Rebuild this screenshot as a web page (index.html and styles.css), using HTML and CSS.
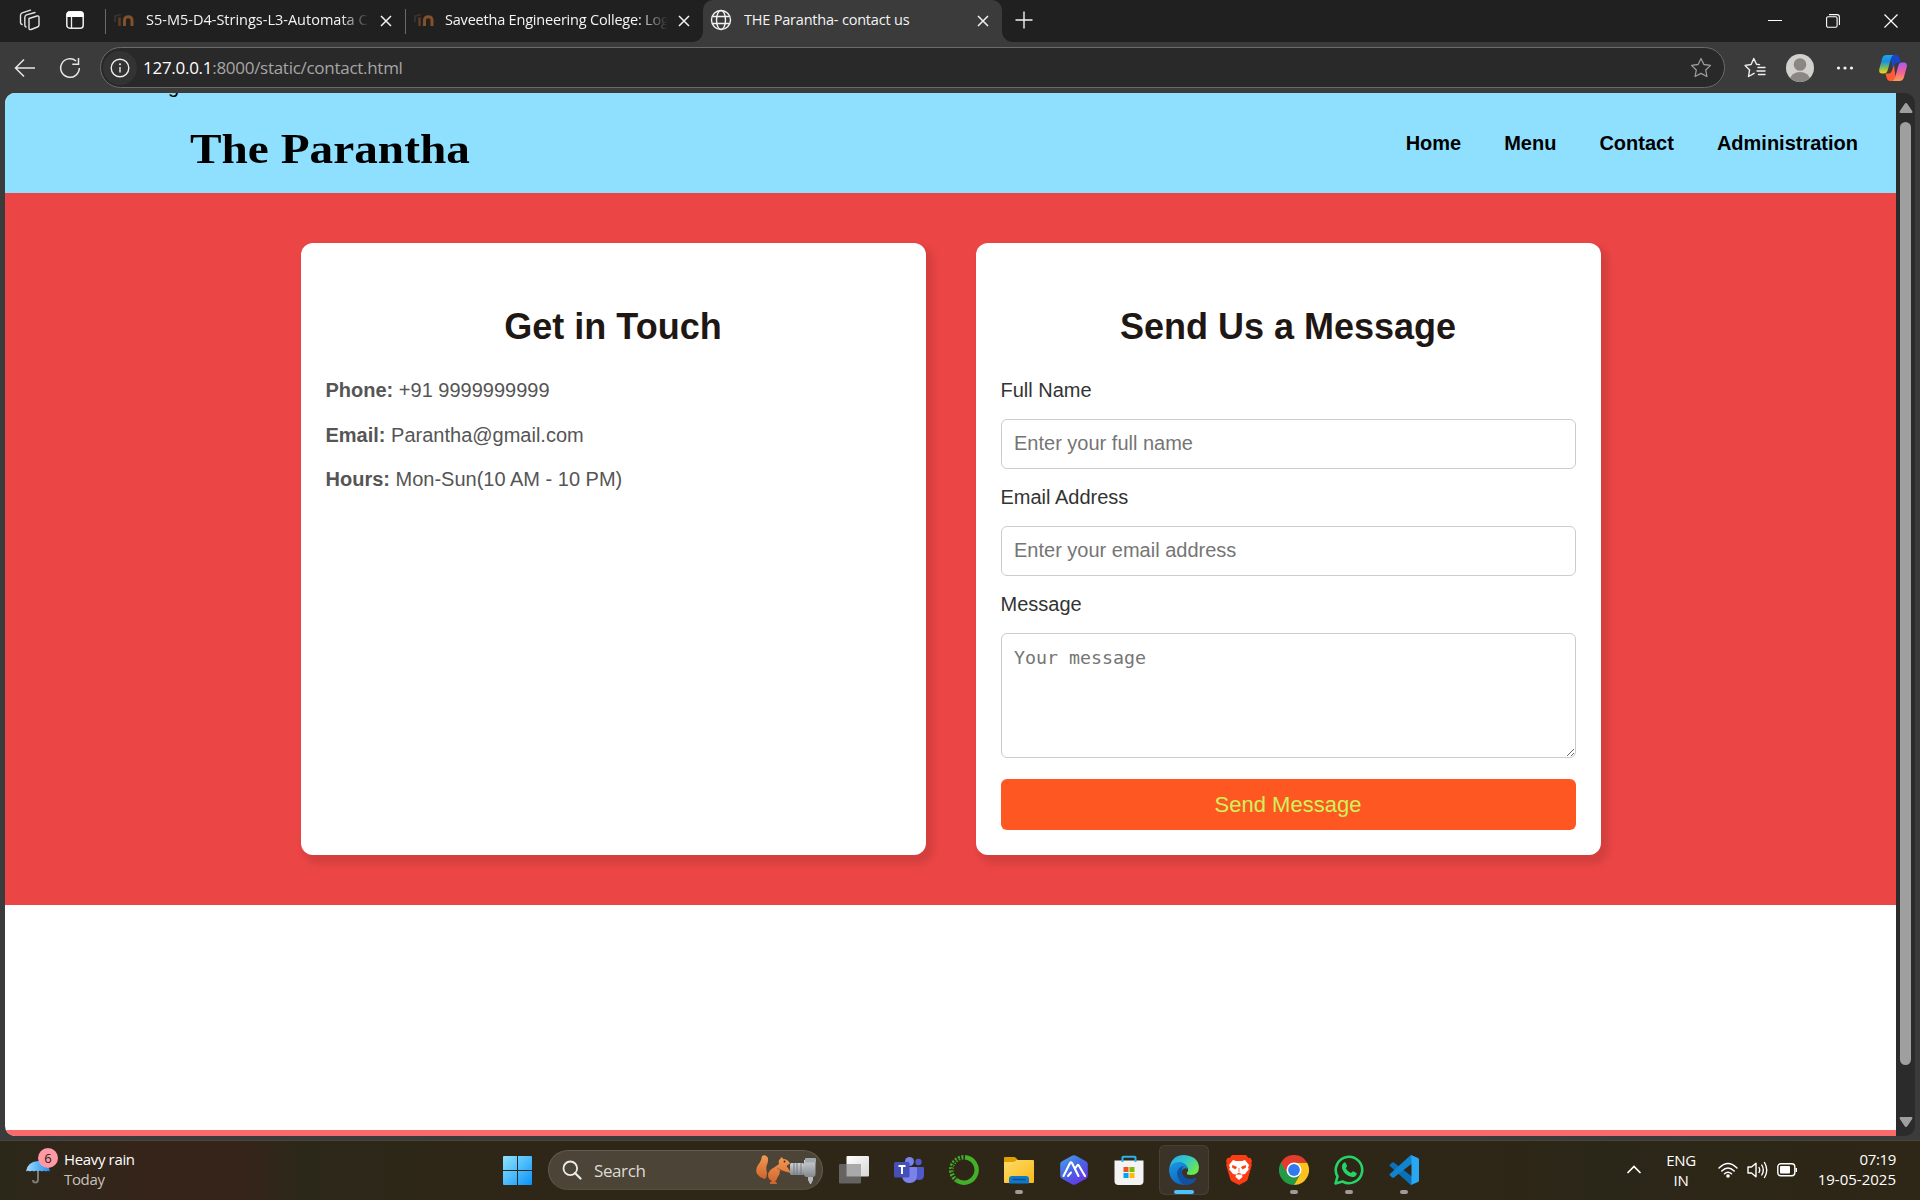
FILE: index.html
```html
<!DOCTYPE html>
<html lang="en">
<head>
<meta charset="utf-8">
<title>THE Parantha- contact us</title>
<link rel="stylesheet" href="styles.css">
</head>
<body>
<div class="browser">
  <div class="tabstrip">
    <div class="strip-tools">
      <svg class="ic-workspaces" viewBox="0 0 22 22" width="22" height="22"><g fill="none" stroke="#e4e4e4" stroke-width="1.400" stroke-linejoin="round" stroke-linecap="round"><path d="M10 9.500l8-2.500q2-.5 2 1.500v7.500q0 1.500-1.500 2l-6.500 2.500q-2 .5-2-1.500z"/><path d="M7 18q-1.200-.5-1.200-2V8.500q0-2 1.700-2.600L16 3.500"/><path d="M3 15.500q-1.500-.5-1.500-2V6.500q0-2 1.700-2.600L11.500 1.200"/></g></svg>
      <svg class="ic-tabs" viewBox="0 0 20 20" width="20" height="20"><rect x="1.800" y="1.800" width="16.400" height="16.400" rx="3" fill="none" stroke="#eee" stroke-width="1.500"/><path d="M1.500 7V4q0-2.500 2.500-2.500h12q2.500 0 2.500 2.500v3z" fill="#fff"/><path d="M6.500 7v11" stroke="#eee" stroke-width="1.300"/></svg>
    </div>
    <div class="tab">
      <svg class="moodle" viewBox="0 0 20 14" width="20" height="14"><path d="M0 3.500L7 1.500M1 4v5" fill="none" stroke="#3a3230" stroke-width="1.800"/><path d="M5.500 13V4.500" fill="none" stroke="#5f3d26" stroke-width="2.600"/><path d="M10.500 13V7q0-3.300 3.700-3.300T18 7v6" fill="none" stroke="#83502a" stroke-width="3"/></svg>
      <span class="tab-title t1">S5-M5-D4-Strings-L3-Automata C</span>
      <svg class="close" viewBox="0 0 12 12" width="12" height="12"><path d="M1 1l10 10M11 1L1 11" stroke="#f2f2f2" stroke-width="1.500"/></svg>
    </div>
    <div class="tab tab-b">
      <svg class="moodle" viewBox="0 0 20 14" width="20" height="14"><path d="M0 3.500L7 1.500M1 4v5" fill="none" stroke="#3a3230" stroke-width="1.800"/><path d="M5.500 13V4.500" fill="none" stroke="#5f3d26" stroke-width="2.600"/><path d="M10.500 13V7q0-3.300 3.700-3.300T18 7v6" fill="none" stroke="#83502a" stroke-width="3"/></svg>
      <span class="tab-title t2">Saveetha Engineering College: Log</span>
      <svg class="close" viewBox="0 0 12 12" width="12" height="12"><path d="M1 1l10 10M11 1L1 11" stroke="#f2f2f2" stroke-width="1.500"/></svg>
    </div>
    <div class="tab active">
      <svg class="globe" viewBox="0 0 22 22" width="22" height="22"><g fill="none" stroke="#f2f2f2" stroke-width="1.400"><circle cx="11" cy="11" r="9.500"/><ellipse cx="11" cy="11" rx="4.500" ry="9.500"/><path d="M2.500 7.500h17M2.500 14.500h17"/></g></svg>
      <span class="tab-title t3">THE Parantha- contact us</span>
      <svg class="close" viewBox="0 0 12 12" width="12" height="12"><path d="M1 1l10 10M11 1L1 11" stroke="#f2f2f2" stroke-width="1.500"/></svg>
    </div>
    <svg class="plus" viewBox="0 0 18 18" width="18" height="18"><path d="M9 .5v17M.5 9h17" stroke="#f2f2f2" stroke-width="1.400"/></svg>
    <div class="win-controls">
      <svg viewBox="0 0 14 14" width="14" height="14"><path d="M0 6.500h14" stroke="#fff"/></svg>
      <svg viewBox="0 0 14 14" width="14" height="14"><g fill="none" stroke="#fff" stroke-width="1.100"><rect x=".6" y="2.800" width="10.500" height="10.500" rx="1.500"/><path d="M3 .6h8q2.400 0 2.400 2.400v8"/></g></svg>
      <svg viewBox="0 0 14 14" width="14" height="14"><path d="M.5.5l13 13M13.500.5l-13 13" stroke="#fff" stroke-width="1.200"/></svg>
    </div>
  </div>

  <div class="toolbar">
    <svg class="back" viewBox="0 0 22 20" width="22" height="20"><path d="M21 10H1.500M10 1.500L1.500 10l8.500 8.500" fill="none" stroke="#e8e8e8" stroke-width="1.500"/></svg>
    <svg class="reload" viewBox="0 0 22 22" width="22" height="22"><path d="M20.300 11a9.300 9.300 0 1 1-3.200-7M19.500 1v6.200h-6.200" fill="none" stroke="#e8e8e8" stroke-width="1.500"/></svg>
    <div class="address">
      <span class="info"><svg viewBox="0 0 20 20" width="20" height="20"><circle cx="10" cy="10" r="8.800" fill="none" stroke="#eee" stroke-width="1.400"/><path d="M10 9v5.500" stroke="#eee" stroke-width="1.400"/><circle cx="10" cy="6.300" r="1" fill="#eee"/></svg></span>
      <span class="url"><b>127.0.0.1</b>:8000/static/contact.html</span>
      <svg class="star" viewBox="0 0 22 21" width="22" height="21"><path d="M11 1.500l2.900 6 6.600.9-4.800 4.600 1.200 6.500-5.900-3.100-5.900 3.100 1.200-6.500L1.500 8.400l6.600-.9z" fill="none" stroke="#9b9b9b" stroke-width="1.300" stroke-linejoin="round"/></svg>
    </div>
    <svg class="favs" viewBox="0 0 22 21" width="22" height="21"><g fill="none" stroke="#f0f0f0" stroke-width="1.400" stroke-linejoin="round" stroke-linecap="round"><path d="M15.500 7.600l-3-.3-2.700-5.800-2.700 6-6 .9 4.500 4.500-1.100 6.600 5.600-3.200"/><path d="M14 10.500h7M13 14h8M14.500 17.500H21"/></g></svg>
    <svg class="avatar" viewBox="0 0 28 28" width="28" height="28"><defs><clipPath id="av"><circle cx="14" cy="14" r="14"/></clipPath></defs><g clip-path="url(#av)"><rect width="28" height="28" fill="#d3d1ce"/><circle cx="14" cy="10.500" r="6.300" fill="#8b8784"/><ellipse cx="14" cy="26" rx="10" ry="8" fill="#8b8784"/></g></svg>
    <svg class="dots" viewBox="0 0 18 4" width="18" height="4"><g fill="#f2f2f2"><circle cx="2.500" cy="2" r="1.600"/><circle cx="9" cy="2" r="1.600"/><circle cx="15.500" cy="2" r="1.600"/></g></svg>
    <svg class="copilot" viewBox="0 0 28 26" width="28" height="26"><defs><linearGradient id="c1" x1="0" y1="0" x2="0" y2="1"><stop offset="0" stop-color="#1fa3f5"/><stop offset=".35" stop-color="#1b8fe0"/><stop offset=".7" stop-color="#7fc05a"/><stop offset="1" stop-color="#ffd00a"/></linearGradient><linearGradient id="c2" x1="0" y1="0" x2="0" y2="1"><stop offset="0" stop-color="#a95cf2"/><stop offset=".5" stop-color="#ef5e9d"/><stop offset="1" stop-color="#ff9f4a"/></linearGradient></defs><path d="M11 0h6q2.600 0 3.500 3l1.300 4.500h-3q-2.600 0-3.400 2.500L14 15z" fill="#1746c8"/><path d="M17 26h-6q-2.400 0-3.300-3L6.500 18.500h3q2.500 0 3.300-2.500L15 10z" fill="#ff5c35"/><path d="M7.500 0h7.200q-1.900.6-2.600 3L8.600 15.500Q7.700 18.500 5 18.500H3Q-.5 18.500.3 14L3 4Q4 0 7.500 0z" fill="url(#c1)"/><path d="M20.500 26h-7.200q1.900-.6 2.600-3l3.500-12.500q.9-3 3.600-3h2q3.500 0 2.700 4.500L25 22q-1 4-4.500 4z" fill="url(#c2)"/></svg>
  </div>

  <div class="viewport">
    <main class="page">
      <header class="site-header">
        <span class="prev-line">g</span>
        <h1>The Parantha</h1>
        <nav><a>Home</a><a>Menu</a><a>Contact</a><a>Administration</a></nav>
      </header>
      <section class="contact">
        <div class="card">
          <h2>Get in Touch</h2>
          <div class="details">
            <p><strong>Phone:</strong> +91 9999999999</p>
            <p><strong>Email:</strong> Parantha@gmail.com</p>
            <p><strong>Hours:</strong> Mon-Sun(10 AM - 10 PM)</p>
          </div>
        </div>
        <form class="card">
          <h2>Send Us a Message</h2>
          <label for="name">Full Name</label>
          <input id="name" type="text" placeholder="Enter your full name">
          <label for="email">Email Address</label>
          <input id="email" type="email" placeholder="Enter your email address">
          <label for="msg">Message</label>
          <textarea id="msg" placeholder="Your message"></textarea>
          <button type="button">Send Message</button>
        </form>
      </section>
      <footer class="site-footer"></footer>
    </main>
    <div class="scrollbar">
      <svg viewBox="0 0 14 10" width="14" height="10"><path d="M7 0q.8 0 1.300.8l5 7.500Q14 10 12.500 10h-11Q0 10 .7 8.300l5-7.500Q6.200 0 7 0z" fill="#9f9f9f"/></svg>
      <div class="thumb"></div>
      <svg viewBox="0 0 14 10" width="14" height="10"><path d="M7 10q.8 0 1.300-.8l5-7.500Q14 0 12.500 0h-11Q0 0 .7 1.700l5 7.500Q6.200 10 7 10z" fill="#9f9f9f"/></svg>
    </div>
  </div>
</div>

<div class="taskbar">
  <div class="weather">
    <div class="umbrella">
      <svg viewBox="0 0 26 24" width="26" height="24"><defs><linearGradient id="um"><stop offset="0" stop-color="#a5dcff"/><stop offset=".5" stop-color="#5cb4f8"/><stop offset="1" stop-color="#2c8eea"/></linearGradient></defs><path d="M13 10v9.500q0 3-2.500 3T8 20" fill="none" stroke="#7e7a76" stroke-width="2"/><path d="M1 11.500Q2 2 13 1q11 1 12 10.500-2-1.500-4 0-2-1.500-4 0-2-1.500-4 0-2-1.500-4 0-2-1.500-4 0-2-1.500-4 0z" fill="url(#um)"/></svg>
      <span class="badge">6</span>
    </div>
    <div class="weather-text"><span>Heavy rain</span><span class="dim">Today</span></div>
  </div>

  <div class="apps">
    <svg class="start" viewBox="0 0 29 29" width="29" height="29"><defs><linearGradient id="wn" x1="0" y1="0" x2="1" y2="1"><stop offset="0" stop-color="#8fe3ff"/><stop offset="1" stop-color="#0a93f8"/></linearGradient></defs><path d="M1 0h13v14H0V1q0-1 1-1zM15 0h13q1 0 1 1v13H15zM0 15h14v14H1q-1 0-1-1zM15 15h14v13q0 1-1 1H15z" fill="url(#wn)"/></svg>
    <div class="search">
      <svg viewBox="0 0 20 20" width="20" height="20"><circle cx="8.300" cy="8.300" r="6.800" fill="none" stroke="#ececec" stroke-width="1.800"/><path d="M13 13l5.500 5.500" stroke="#ececec" stroke-width="2.200" stroke-linecap="round"/></svg>
      <span>Search</span>
      <svg class="squirrel" viewBox="0 0 62 32" width="62" height="32"><defs><linearGradient id="sq" x1="0" y1="0" x2="0" y2="1"><stop offset="0" stop-color="#f39a54"/><stop offset="1" stop-color="#cf642a"/></linearGradient><linearGradient id="cm" x1="0" y1="0" x2="0" y2="1"><stop offset="0" stop-color="#d0d3d6"/><stop offset="1" stop-color="#84898f"/></linearGradient></defs><path d="M7 2q4-2 6 2 .5 4-1.500 8-.5 4 .5 7 0 4-2 6-5-1-8-5Q0 15 3 11 6 8 7 2z" fill="url(#sq)"/><path d="M25 5l2-2 1 2q5 0 7 4.500l-3.500 2.500q2.500 3 4.500 7l-6-1.500-5-2q.5 4-2.500 8-.5 2-2.500 4l2 1.500q.5 1-1 1h-6v-1.500l2-1.500q-4-1.500-4-6 .5-5 6-7.500l5-3.500q-1-3.500 1-5z" fill="url(#sq)"/><path d="M22 14q3 2 6 3.500" fill="none" stroke="#a94e25" stroke-width=".8"/><circle cx="29.500" cy="7.500" r=".9" fill="#3b2118"/><rect x="35" y="9" width="14" height="12" rx="1.500" fill="url(#cm)"/><path d="M39 9v12M42 9v12M46 9v12" stroke="#777c81"/><path d="M49 6l9-1q2.500 0 2.500 3v12q0 3-3 3h-6q-2.500 0-2.500-3z" fill="url(#cm)"/><rect x="50" y="4" width="11" height="4.500" rx="1" fill="#a4a9ad"/><path d="M53 23h5v3l-2 4h-1l-2-4z" fill="#b7babd"/></svg>
    </div>
    <div class="app"><svg viewBox="0 0 30 30" width="30" height="30"><defs><linearGradient id="tv" x1="0" y1="0" x2="1" y2="1"><stop offset="0" stop-color="#fff"/><stop offset="1" stop-color="#d6d6d6"/></linearGradient></defs><rect x="7.500" y="1" width="22.500" height="20.500" rx="1" fill="url(#tv)"/><rect x="0" y="9" width="22" height="19.500" rx="1" fill="#646360"/><path d="M7.500 9H22v12.500H7.500z" fill="#a9a9a9"/></svg></div>
    <div class="app"><svg viewBox="0 0 30 30" width="30" height="30"><circle cx="24.500" cy="7" r="3.200" fill="#5059c9"/><path d="M20 12h9q1 0 1 1v7q0 5-5 5-3 0-5-2z" fill="#5059c9"/><circle cx="15.500" cy="6.500" r="4.500" fill="#7b83eb"/><path d="M8 12h14q1 0 1 1v7q0 8-7.500 8-6 0-7.500-6z" fill="#7b83eb"/><rect x="0" y="7" width="15.500" height="15.500" rx="1.500" fill="#464eb8"/><path d="M4.500 11h7M8 11v8" stroke="#fff" stroke-width="2"/></svg></div>
    <div class="app"><svg viewBox="0 0 30 30" width="30" height="30"><path d="M16 2.300A12.700 12.700 0 1 1 8 25.600" fill="none" stroke="#43b02a" stroke-width="4.400"/><path d="M8 25.600A12.700 12.700 0 0 1 14.500 2.300" fill="none" stroke="#43b02a" stroke-width="4.400" stroke-dasharray="2 1.300"/><path d="M7 24A12 12 0 0 1 14 3" fill="none" stroke="#2e2617" stroke-width="1.200" stroke-dasharray="1.500 2"/></svg></div>
    <div class="app"><svg viewBox="0 0 30 30" width="30" height="30"><defs><linearGradient id="fe" x1="0" y1="0" x2="1" y2="1"><stop offset="0" stop-color="#ffdb66"/><stop offset="1" stop-color="#f7b918"/></linearGradient></defs><path d="M0 3q0-1 1-1h9q1 0 2 1l2 2h-2l-2 3H0z" fill="#e0a100"/><path d="M0 7h9q2 0 3-2h17q1 0 1 1v21q0 1-1 1H1q-1 0-1-1z" fill="url(#fe)"/><path d="M5 28.500V24q0-3 3-3h14q3 0 3 3v4.500z" fill="#1078c8"/><path d="M8.500 24.500h13" stroke="#0a4e94" stroke-width="1.500"/></svg><i class="run"></i></div>
    <div class="app"><svg viewBox="0 0 30 30" width="30" height="30"><defs><linearGradient id="hx" x1="0" y1="0" x2=".7" y2="1"><stop offset="0" stop-color="#4ca3ed"/><stop offset=".5" stop-color="#4669e4"/><stop offset="1" stop-color="#6734e8"/></linearGradient></defs><path d="M13 .7q2-1 4 0l10 5.600q1.800 1 1.800 3v11.400q0 2-1.800 3l-10 5.600q-2 1-4 0L3 23.700q-1.800-1-1.800-3V9.300q0-2 1.800-3z" fill="url(#hx)"/><path d="M4.500 21l6.500-13q1-1.500 2 0l6.500 13M16.500 13l1.700-2.500q.8-1.200 1.600 0L26 21M9 21l3-3.500" fill="none" stroke="#fff" stroke-width="2.100" stroke-linecap="round"/></svg></div>
    <div class="app"><svg viewBox="0 0 30 30" width="30" height="30"><path d="M.5 5.500h29V26q0 4-4 4h-21q-4 0-4-4z" fill="#f3f3f3"/><path d="M8.500 7V2.500q0-.8.800-.8h11.400q.8 0 .8.800V7" fill="none" stroke="#29b2ee" stroke-width="2"/><path d="M9.500 12h5v5h-5z" fill="#f25022"/><path d="M15.500 12h5v5h-5z" fill="#7fba00"/><path d="M9.500 18h5v5h-5z" fill="#00a4ef"/><path d="M15.500 18h5v5h-5z" fill="#ffb900"/></svg></div>
    <div class="app open"><svg viewBox="0 0 30 30" width="30" height="30"><defs><linearGradient id="eg" x1="0" y1="0" x2="1" y2=".6"><stop offset="0" stop-color="#29a9e8"/><stop offset=".5" stop-color="#2fc5cf"/><stop offset="1" stop-color="#6be84f"/></linearGradient><linearGradient id="eb" x1="0" y1="0" x2=".6" y2="1"><stop offset="0" stop-color="#1a9be6"/><stop offset="1" stop-color="#0d62bb"/></linearGradient></defs><path d="M0 15Q1 6 10 6q8 1 8.500 8-4-2-5.500 2-1 7 5 10 5 2 9-1-4 5-12 5Q1 29 0 15z" fill="url(#eb)"/><path d="M8 18q1-6 7-7-3 3-2 7 2 6 9 6 3 0 5-1.500.8.500 0 1.500-4 6-12 6-6-4-7-12z" fill="#1151a0"/><path d="M0 15Q2 0 15 0q14 1 15 12 0 8-8 8-5 0-4-2.500 2-2 .5-5Q16 7 10 7 2 7 0 15z" fill="url(#eg)"/></svg><i class="run"></i></div>
    <div class="app"><svg viewBox="0 0 30 30" width="30" height="30"><path d="M8 0h14l2.500 3 2-.3L28 6l-.7 2 .5 2-4 14q-.5 1.500-2 2.500L15 30l-6.800-3.500q-1.500-1-2-2.500l-4-14 .5-2L2 6l1.500-3.300 2 .3z" fill="#fb3c14"/><path d="M9 5l3 1h6l3-1 4 5-1 3 1 1-4 5-3 .5.5 2.500-3.500 3-3.500-3 .5-2.500-3-.5-4-5 1-1-1-3z" fill="#fff"/><path d="M8.500 10.500l4 1.500-1 2-3-1.500zM21.500 10.500l-4 1.500 1 2 3-1.500zM15 13v4M12.500 19.500l2.500-1.500 2.500 1.500" fill="#fb3c14" stroke="#fb3c14" stroke-width=".7"/></svg></div>
    <div class="app"><svg viewBox="0 0 30 30" width="30" height="30"><path d="M15 15L2 7.500A15 15 0 0 0 15 30l6.500-11.200z" fill="#249a46"/><path d="M15 7.500h13A15 15 0 0 1 15 30l6.500-11.200z" fill="#fcc31e"/><path d="M2 7.500A15 15 0 0 1 28 7.500H15l-6.500 11.200z" fill="#e33b2e"/><circle cx="15" cy="15" r="7.500" fill="#fff"/><circle cx="15" cy="15" r="5.900" fill="#3079ee"/></svg><i class="run"></i></div>
    <div class="app"><svg viewBox="0 0 30 30" width="30" height="30"><path d="M1.500 28.500l2-7a13.200 13.200 0 1 1 5 5z" fill="none" stroke="#25d366" stroke-width="2.600" stroke-linejoin="round"/><path d="M10 7.500q1-.6 1.800.6l1.200 2.700q.3.800-1.300 2.500 2 3.800 5.300 4.800 1.500-1.800 2-1.800l3.200 1.500q1 .5.300 2-1.200 2.700-4.400 2.200-7.600-1.500-10-8.500-.8-3.800 1.900-6z" fill="#25d366"/></svg><i class="run"></i></div>
    <div class="app"><svg viewBox="0 0 30 30" width="30" height="30"><path d="M1 9.500l2-2q1-.7 2 0L23 21.500V29q0 1-1.500.8L.8 11q-.8-.8.200-1.500z" fill="#0a70b8"/><path d="M1 20.500l2 2q1 .7 2 0L23 8.500V1Q23 0 21.500.3L.8 19q-.8.800.2 1.500z" fill="#1184d0"/><path d="M22 0l7 3q1 .5 1 1.500v21q0 1-1 1.500l-7 3 .5-2V2z" fill="#2aa7f2"/></svg><i class="run"></i></div>
  </div>

  <div class="tray">
    <svg viewBox="0 0 14 9" width="14" height="9"><path d="M1 7.500l6-6 6 6" fill="none" stroke="#fff" stroke-width="1.700" stroke-linecap="round"/></svg>
    <div class="lang"><span>ENG</span><span>IN</span></div>
    <div class="status">
      <svg viewBox="0 0 20 16" width="20" height="16"><g fill="none" stroke="#fff" stroke-width="1.500" stroke-linecap="round"><path d="M1 6Q10-3 19 6M3.800 9q6.200-6 12.400 0M6.500 11.800q3.500-3.200 7 0"/></g><circle cx="10" cy="14" r="1.800" fill="#fff"/></svg>
      <svg viewBox="0 0 21 18" width="21" height="18"><g fill="none" stroke="#fff" stroke-width="1.400" stroke-linejoin="round" stroke-linecap="round"><path d="M1 6h3.500L9 2.200v13.600L4.500 12H1z"/><path d="M12 6.500q1.500 2.500 0 5M14.800 4q3 5 0 10M17.500 1.500q4.500 7.500 0 15"/></g></svg>
      <svg viewBox="0 0 21 14" width="21" height="14"><rect x=".8" y=".8" width="17" height="12" rx="3" fill="none" stroke="#fff" stroke-width="1.400"/><rect x="3" y="3" width="10" height="7.600" rx="1" fill="#fff"/><path d="M18.500 5h1.500v4h-1.500z" fill="#fff"/></svg>
    </div>
    <div class="clock"><span>07:19</span><span class="date">19-05-2025</span></div>
  </div>
</div>
</body>
</html>
```
FILE: styles.css
```css
* { box-sizing: border-box; }
body {
  margin: 0;
  width: 1920px;
  height: 1200px;
  overflow: hidden;
  background: #3b3b3b;
  font-family: "Open Sans", "Noto Sans", sans-serif;
}
svg { display: block; flex: none; }
.browser { height: 1140px; display: flex; flex-direction: column; }

/* tab strip */
.tabstrip { height: 42px; background: #202020; display: flex; align-items: flex-start; flex: none; }
.strip-tools { width: 105px; display: flex; padding: 9px 0 0 19px; gap: 24px; }
.ic-tabs { margin-top: 1px; }
.tab { width: 300px; height: 42px; display: flex; align-items: flex-start; padding: 0 13px 0 8px; position: relative; }
.tab::before { content: ""; position: absolute; left: 0; top: 9px; width: 1px; height: 25px; background: #6a6a6a; }
.tab-b { width: 298px; }
.moodle { margin: 13px 12px 0 1px; }
.tab-b .moodle { margin: 13px 11px 0 1px; }
.tab-title { flex: 1; font-size: 14.5px; line-height: 20px; margin-top: 10px; color: #f4f4f4; white-space: nowrap; overflow: hidden; }
.t1 { letter-spacing: 0; }
.t2 { letter-spacing: -.2px; }
.t3 { letter-spacing: -.2px; }
.t1, .t2 { -webkit-mask-image: linear-gradient(90deg, #000 86%, transparent 99%); mask-image: linear-gradient(90deg, #000 86%, transparent 99%); }
.close { margin: 15px 0 0 8px; }
.tab.active { width: 299px; background: #3b3b3b; border-radius: 10px 10px 0 0; }
.tab.active::before { left: -10px; top: auto; bottom: 0; width: 10px; height: 10px; background: radial-gradient(circle at 0 0, transparent 9.5px, #3b3b3b 10px); }
.tab.active::after { content: ""; position: absolute; right: -10px; bottom: 0; width: 10px; height: 10px; background: radial-gradient(circle at 100% 0, transparent 9.5px, #3b3b3b 10px); }
.globe { margin: 9px 12px 0 -1px; }
.plus { margin: 11px 0 0 13px; }
.win-controls { margin: 14px 22px 0 auto; display: flex; gap: 44px; }

/* toolbar */
.toolbar { height: 51px; flex: none; display: flex; align-items: center; padding-left: 14px; }
.reload { margin-left: 23px; }
.address { margin-left: 19px; width: 1625px; height: 41px; border: 1px solid #6b6b6b; border-radius: 21px; background: #292929; display: flex; align-items: center; padding: 0 12px 0 2px; }
.info { width: 34px; height: 34px; border-radius: 50%; background: #333; display: flex; align-items: center; justify-content: center; }
.url { margin: 0 auto 0 6px; font-size: 17px; letter-spacing: -.28px; color: #a6a6a6; white-space: nowrap; }
.url b { font-weight: 400; color: #fff; }
.favs { margin-left: 19px; }
.avatar { margin-left: 20px; }
.dots { margin-left: 22px; }
.copilot { margin-left: 25px; }

/* page viewport */
.viewport { height: 1043px; width: 1910px; margin-left: 5px; display: flex; border-radius: 10px; overflow: hidden; flex: none; }
.page { width: 1891px; background: #fff; display: flex; flex-direction: column; font-family: "Liberation Sans", Arial, sans-serif; }
.site-header { height: 100px; background: #8fe0ff; display: flex; justify-content: space-between; padding: 0 38px 0 185px; position: relative; flex: none; }
.prev-line { position: absolute; left: 163px; top: -19px; font: 20px/24px "Liberation Sans", sans-serif; }
.site-header h1 { margin: 31px 0 0; font: bold 43px/50px Georgia, "Liberation Serif", serif; transform: scaleX(1.1); transform-origin: 0 0; color: #000; }
nav { display: flex; gap: 43px; font: bold 20px/24px "Liberation Sans", Arial, sans-serif; padding-top: 38px; color: #000; }
.contact { height: 712px; background: #eb4645; display: flex; justify-content: center; gap: 50px; padding: 50px 0; flex: none; }
.site-footer { height: 6px; background: #fb6a6a; margin-top: auto; }
.card { width: 625px; height: 612px; background: #fff; border-radius: 12px; padding: 25px; box-shadow: 5px 6px 7px 3px rgba(0, 0, 0, .1); display: flex; flex-direction: column; color: #333; font-size: 20px; line-height: 24px; }
.card h2 { margin: 38px 0 30px; font-size: 36px; line-height: 42px; text-align: center; color: #1f1713; }
.details { display: flex; flex-direction: column; gap: 20.5px; color: #555; }
.details p { margin: 0; }
input, textarea { width: 100%; margin: 17px 0 16px; border: 1px solid #ccc; border-radius: 6px; padding: 0 12.5px; font: 20px/24px "Liberation Sans", Arial, sans-serif; background: #fff; display: block; flex: none; }
input { height: 50px; padding-bottom: 2px; }
textarea { height: 125px; margin-bottom: 21px; padding-top: 12px; font: 18.3px/24px Consolas, "DejaVu Sans Mono", monospace; }
input::placeholder, textarea::placeholder { color: #757575; }
button { height: 51px; border: 0; border-radius: 6px; background: #ff5722; color: #cdf25a; font: 22px/26px "Liberation Sans", Arial, sans-serif; padding: 0; }

.scrollbar { width: 19px; background: #2b2b2b; display: flex; flex-direction: column; align-items: center; padding: 10px 0 9px; }
.thumb { width: 11px; height: 943px; margin: 9px 0 auto; background: #9f9f9f; border-radius: 6px; }

/* taskbar */
.taskbar { height: 60px; border-top: 1px solid #4b4539; display: flex; color: #fff; font-size: 15px; line-height: 20px; background: linear-gradient(90deg, #2b2819 0, #36241a 150px, #36241a 240px, #2c2819 300px, #2e2617 500px, #2e2617 1480px, #2b2718 1600px, #2e2616 1920px); }
.weather { width: 503px; display: flex; padding: 8px 0 0 25px; gap: 13px; }
.umbrella { position: relative; width: 26px; padding-top: 11px; }
.badge { position: absolute; left: 13px; top: -1px; width: 20px; height: 20px; border-radius: 50%; background: #ff99a4; color: #1d1d1d; font-size: 13px; line-height: 20px; text-align: center; }
.weather-text, .lang, .clock { display: flex; flex-direction: column; letter-spacing: -.35px; white-space: nowrap; }
.dim { color: #c6c2bd; }
.apps { display: flex; align-items: flex-start; }
.start { margin-top: 15px; }
.search { width: 275px; height: 40px; margin: 9px 6px 0 16px; border-radius: 20px; background: #4b4437; border: 1px solid #625b4f; border-bottom-color: #554e41; display: flex; align-items: center; padding: 0 5px 0 13px; font-size: 17px; color: #dedbd6; letter-spacing: -.4px; }
.search span { margin: 2px auto 0 12px; }
.app { width: 50px; height: 50px; margin: 4px 5px 0 0; position: relative; padding: 10px; border-radius: 6px; }
.app.open { background: #3b3327; box-shadow: inset 0 0 0 1px #474034; }
.run { position: absolute; left: 21px; top: 45px; width: 8px; height: 4px; border-radius: 2px; background: #a09b94; }
.app.open .run { left: 15px; width: 20px; background: #4cc2ff; }
.tray { margin-left: auto; display: flex; padding-right: 24px; }
.tray > svg { margin-top: 24px; }
.lang { padding-top: 9px; margin-left: 26px; align-items: center; width: 28px; }
.status { display: flex; align-items: center; gap: 9px; margin: 0 0 1px 23px; }
.clock { padding-top: 8px; margin-left: 18px; align-items: flex-end; width: 80px; }
.date { letter-spacing: 0; }
```
